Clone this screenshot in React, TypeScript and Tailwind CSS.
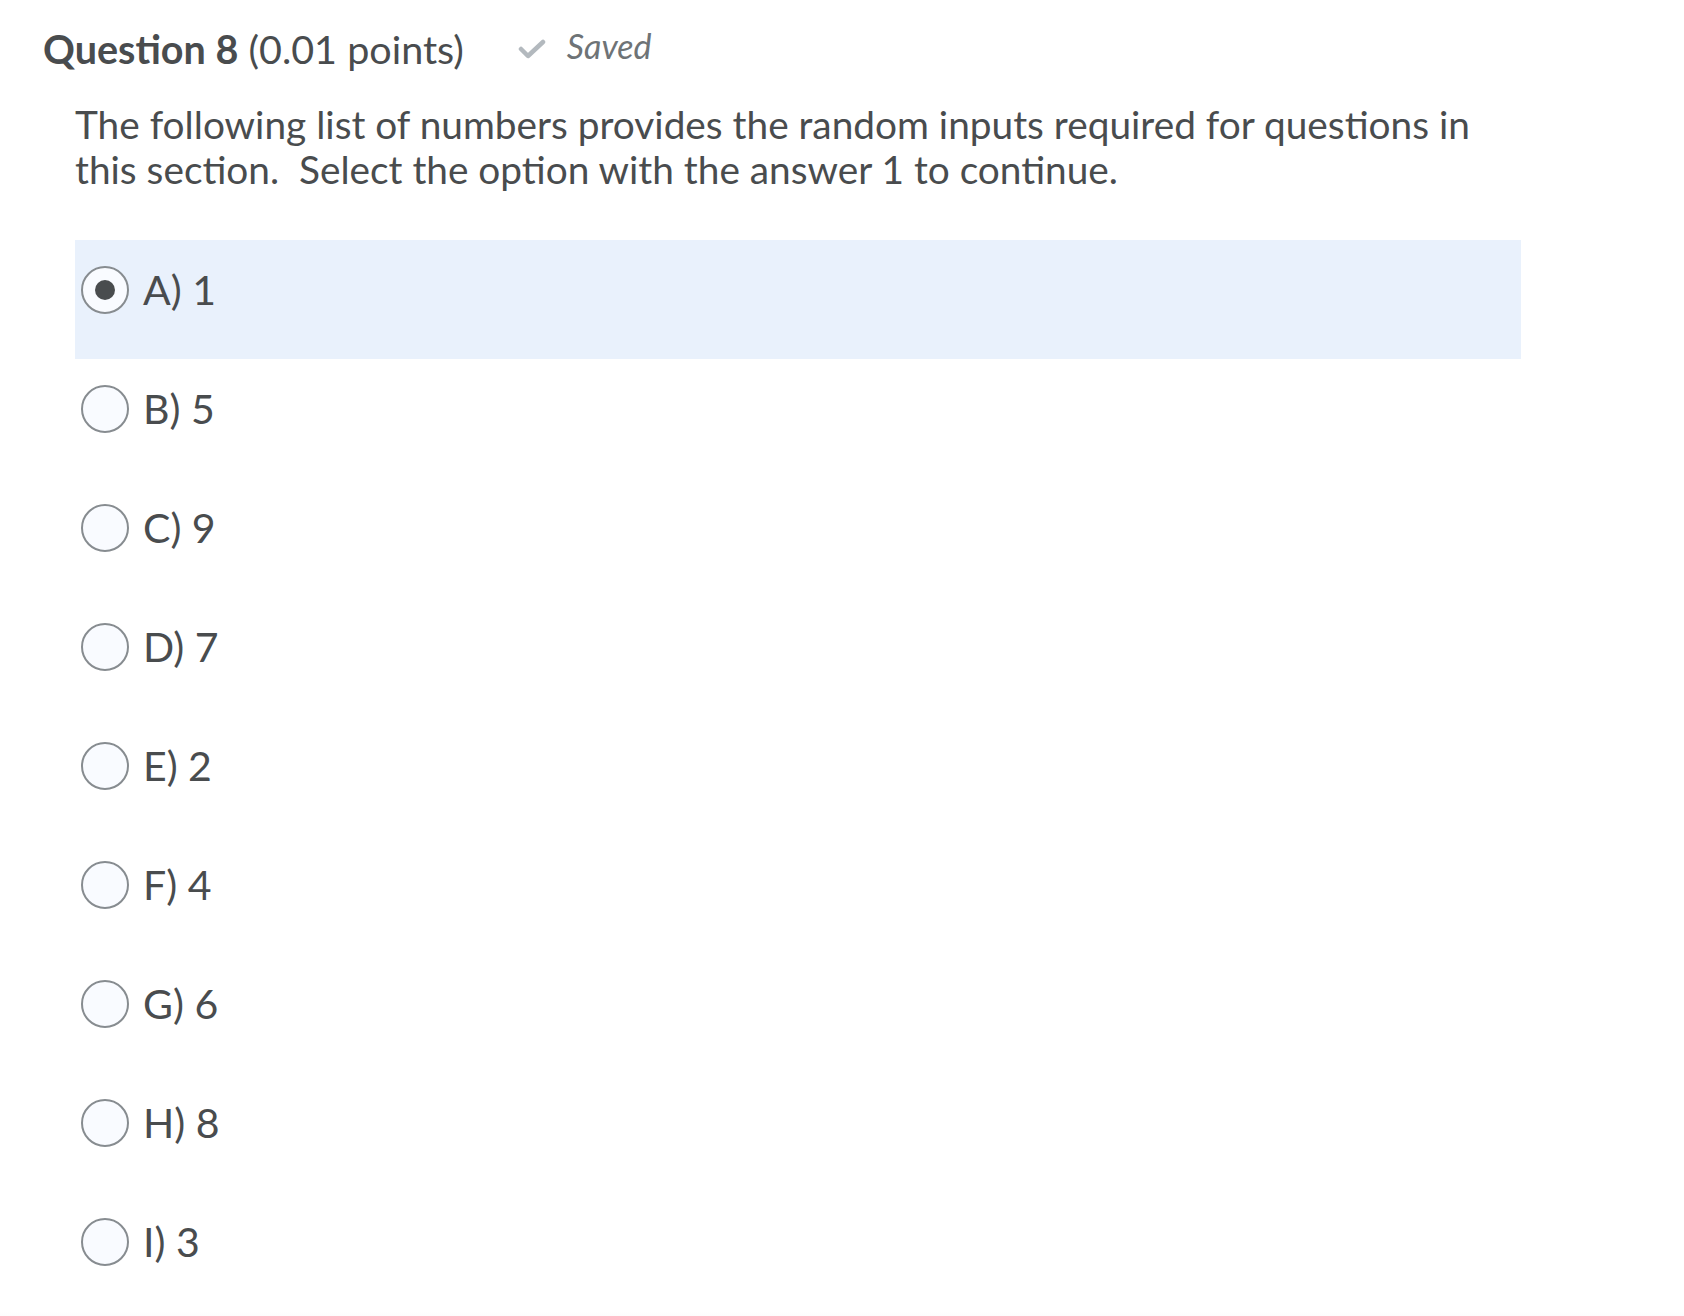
const OPTIONS = [
  { label: "A) 1", selected: true },
  { label: "B) 5" },
  { label: "C) 9" },
  { label: "D) 7" },
  { label: "E) 2" },
  { label: "F) 4" },
  { label: "G) 6" },
  { label: "H) 8" },
  { label: "I) 3" },
];

function Radio({ checked }: { checked?: boolean }) {
  return (
    <span className="w-[48px] h-[48px] shrink-0 rounded-full border-2 border-[#878c90] bg-[#f9fbff] flex items-center justify-center">
      {checked && <span className="w-[20px] h-[20px] rounded-full bg-[#494c4e]" />}
    </span>
  );
}

export default function App() {
  return (
    <div className="min-h-screen bg-white flex flex-col text-[#494c4e]" style={{ fontFamily: "Lato, 'Noto Sans', sans-serif" }}>
      <div className="flex-1 px-[43px] pt-[26px]">
        {/* Question header */}
        <div className="flex items-center gap-[54px] h-[46px]">
          <h2 className="text-[39.5px] leading-[46px] whitespace-nowrap">
            <span className="font-bold">Question 8</span> <span>(0.01 points)</span>
          </h2>
          <div className="flex items-center gap-[21px] text-[#6e7376]">
            <svg width="28" height="20" viewBox="0 0 28 20" fill="none" stroke="#b3b9be" strokeWidth="4.5" strokeLinecap="round" strokeLinejoin="round">
              <path d="M3 10l7 7L25 3" />
            </svg>
            <span className="italic text-[34px] leading-[40px] -mt-[6px]">Saved</span>
          </div>
        </div>

        <div className="ml-[32px]">
          {/* Prompt */}
          <p className="mt-[30px] text-[38.8px] leading-[45px] whitespace-nowrap">
            The following list of numbers provides the random inputs required for questions in
            <br />
            this section.&nbsp; Select the option with the answer 1 to continue.
          </p>

          {/* Options */}
          <div className="mt-[48px] w-[1446px] flex flex-col">
            {OPTIONS.map((o) => (
              <label
                key={o.label}
                className={`h-[119px] pl-[6px] pt-[26px] ${o.selected ? "bg-[#e9f1fc]" : ""}`}
              >
                <span className="flex items-center gap-[14px] h-[48px]">
                  <Radio checked={o.selected} />
                  <span className="text-[41px] leading-[48px] whitespace-pre">{o.label}</span>
                </span>
              </label>
            ))}
          </div>
        </div>
      </div>
      <div className="h-[26px] bg-gradient-to-b from-white to-[#f3f3f3]" />
    </div>
  );
}
